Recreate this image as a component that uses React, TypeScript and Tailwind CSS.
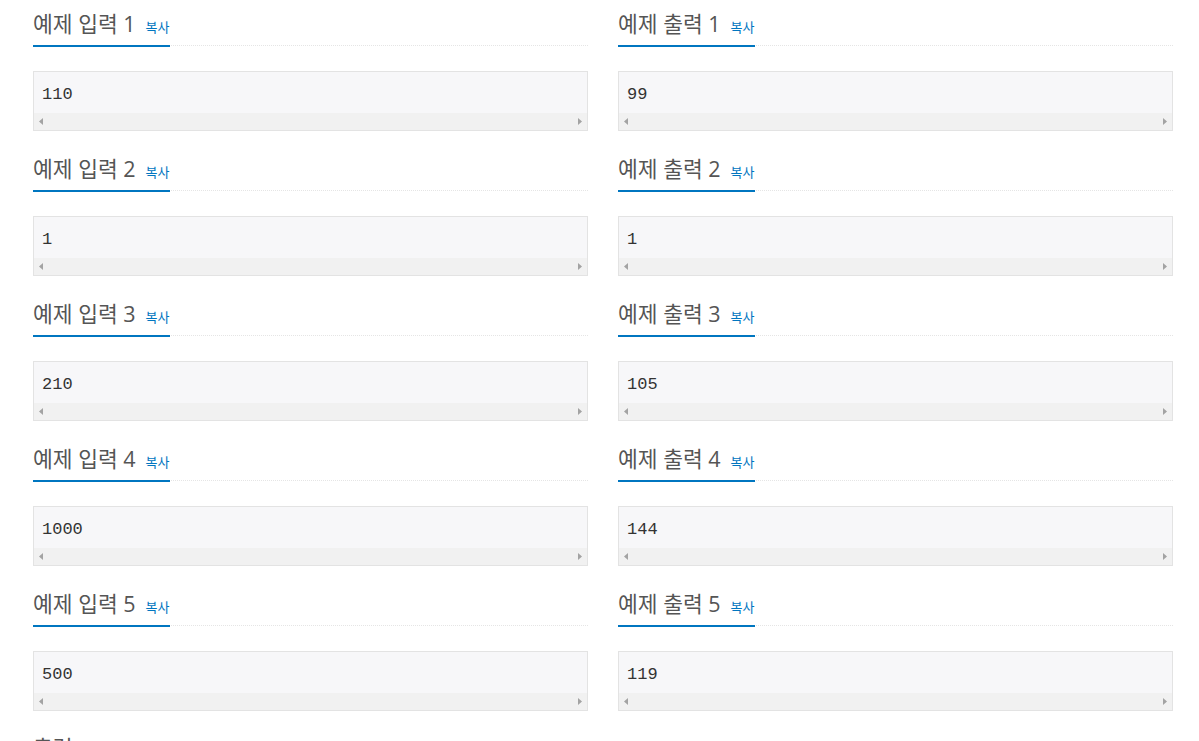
import React from 'react'

type Sample = { title: string; value: string }

const rows: [Sample, Sample][] = [
  [{ title: '예제 입력 1', value: '110' }, { title: '예제 출력 1', value: '99' }],
  [{ title: '예제 입력 2', value: '1' }, { title: '예제 출력 2', value: '1' }],
  [{ title: '예제 입력 3', value: '210' }, { title: '예제 출력 3', value: '105' }],
  [{ title: '예제 입력 4', value: '1000' }, { title: '예제 출력 4', value: '144' }],
  [{ title: '예제 입력 5', value: '500' }, { title: '예제 출력 5', value: '119' }],
]

function Headline({ title, copy }: { title: string; copy?: boolean }) {
  return (
    <div className="pt-[9px] flex border-b border-dotted border-[#e5e5e5]">
      <h2 className="-mb-[2px] h-[38px] pb-[6px] border-b-2 border-[#0076c0] flex items-baseline whitespace-nowrap">
        <span className="leading-[30px] text-[21.5px] font-normal text-[#555]">{title}</span>
        {copy && (
          <span className="ml-[10px] text-[13px] leading-[30px] text-[#0076c0] cursor-pointer">복사</span>
        )}
      </h2>
    </div>
  )
}

function Arrow({ dir }: { dir: 'left' | 'right' }) {
  return (
    <svg width="4" height="7" viewBox="0 0 4 7" className="block">
      {dir === 'left' ? (
        <polygon points="4,0 4,7 0,3.5" fill="#a3a3a3" />
      ) : (
        <polygon points="0,0 0,7 4,3.5" fill="#a3a3a3" />
      )}
    </svg>
  )
}

function SampleBox({ sample }: { sample: Sample }) {
  return (
    <div className="h-[145px]">
      <Headline title={sample.title} copy />
      <div className="mt-[25px] h-[60px] border border-[#e3e3e3] bg-[#f7f7f9] flex flex-col">
        <pre
          className="flex-1 px-[8px] pt-[12px] text-[17px] leading-[22px] text-[#333]"
          style={{ fontFamily: '"Liberation Mono", "DejaVu Sans Mono", monospace' }}
        >
          {sample.value}
        </pre>
        <div className="h-[17px] bg-[#f1f1f1] flex items-center justify-between px-[5px]">
          <Arrow dir="left" />
          <Arrow dir="right" />
        </div>
      </div>
    </div>
  )
}

export default function App() {
  return (
    <div
      className="bg-white h-[741px] overflow-hidden"
      style={{ fontFamily: '"Open Sans", "Noto Sans CJK KR", sans-serif' }}
    >
      <div className="ml-[33px] w-[1140px] grid grid-cols-2 gap-x-[30px]">
        {rows.map(([input, output]) => (
          <React.Fragment key={input.title}>
            <SampleBox sample={input} />
            <SampleBox sample={output} />
          </React.Fragment>
        ))}
        <div className="-mt-[1px]">
          <Headline title="출력" />
        </div>
      </div>
    </div>
  )
}
